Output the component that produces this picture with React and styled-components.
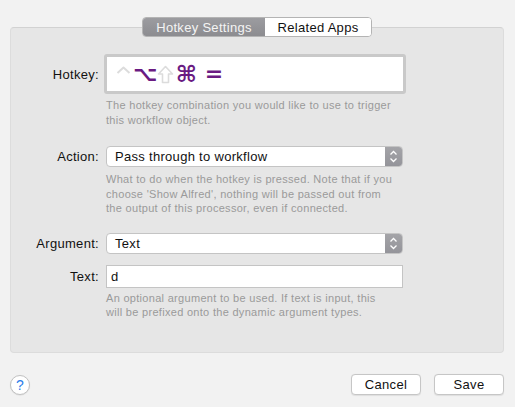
import React from "react";
import styled, { createGlobalStyle } from "styled-components";

const Global = createGlobalStyle`
  html, body { margin: 0; padding: 0; background: #f2f2f2; }
  body { font-family: "Liberation Sans", Arial, sans-serif; font-size: 13px; color: #1a1a1a; }
`;

const Window = styled.div`
  width: 515px;
  height: 407px;
  box-sizing: border-box;
  padding: 17px 11px 0 10px;
  display: flex;
  flex-direction: column;
`;

const Tabs = styled.div`
  align-self: center;
  display: flex;
  height: 20px;
  box-sizing: border-box;
  border: 1px solid #b4b4b4;
  border-radius: 4px;
  overflow: hidden;
  position: relative;
  z-index: 1;
  background: #fff;
`;

const Tab = styled.div`
  width: ${(p) => p.$w}px;
  display: flex;
  align-items: center;
  justify-content: center;
  font-size: 13px;
  letter-spacing: 0.3px;
  color: ${(p) => (p.$active ? "#f4f4f4" : "#111")};
  background: ${(p) => (p.$active ? "linear-gradient(#9c9ca0, #8c8c90)" : "#fff")};
`;

const Panel = styled.div`
  margin-top: -10px;
  height: 326px;
  box-sizing: border-box;
  background: #e6e6e6;
  border: 1px solid #dcdcdc;
  border-top-color: #d2d2d2;
  border-radius: 4px;
  padding-top: 26px;
  display: grid;
  grid-template-columns: 88px 297px;
  column-gap: 7px;
  align-content: start;
`;

const Label = styled.div`
  text-align: right;
  font-size: 13px;
  letter-spacing: 0.3px;
  align-self: center;
  color: #111;
  margin-top: ${(p) => p.$mt || 0}px;
`;

const HotkeyBox = styled.div`
  margin: 0 -3px 0 -2px;
  height: 40px;
  box-sizing: border-box;
  border: 3px solid #c9c9c9;
  border-radius: 3px;
  background: #fff;
  display: flex;
  align-items: center;
  padding-left: 11px;
`;

const Key = styled.span`
  font-family: "DejaVu Sans", sans-serif;
  font-weight: bold;
  font-size: ${(p) => p.$size || 21}px;
  color: #6a1b82;
  line-height: 1;
  width: ${(p) => p.$w}px;
  margin-left: ${(p) => p.$ml || 0}px;
  text-align: center;
  flex: none;
`;

const Hint = styled.div`
  grid-column: 2;
  font-size: 11px;
  letter-spacing: 0.3px;
  line-height: 14.5px;
  color: #9a9a9a;
  margin-top: ${(p) => p.$mt}px;
  margin-bottom: ${(p) => p.$mb}px;
`;

const Select = styled.div`
  height: 21px;
  box-sizing: border-box;
  border: 1px solid #c4c4c4;
  border-radius: 4px;
  background: #fff;
  display: flex;
  align-items: center;
  overflow: hidden;
`;

const SelectText = styled.span`
  flex: 1;
  padding-left: 8px;
  font-size: 13px;
  letter-spacing: 0.3px;
  color: #111;
`;

const Stepper = styled.div`
  width: 17px;
  align-self: stretch;
  background: linear-gradient(#a4a4a8, #94949a);
  display: flex;
  align-items: center;
  justify-content: center;
`;

const TextInput = styled.div`
  margin-top: 11px;
  height: 23px;
  box-sizing: border-box;
  border: 1px solid #c4c4c4;
  background: #fff;
  display: flex;
  align-items: center;
  padding-left: 4px;
  font-size: 13px;
  color: #111;
`;

const Footer = styled.div`
  display: flex;
  align-items: center;
  margin-top: 21px;
`;

const HelpButton = styled.div`
  width: 20px;
  height: 20px;
  box-sizing: border-box;
  border-radius: 50%;
  border: 1px solid #c2c2c2;
  background: #fff;
  color: #2b7de9;
  font-size: 14px;
  display: flex;
  align-items: center;
  justify-content: center;
  box-shadow: 0 0.5px 1px rgba(0,0,0,0.1);
`;

const Spacer = styled.div`
  flex: 1;
`;

const Button = styled.div`
  width: 70px;
  height: 21px;
  box-sizing: border-box;
  border: 1px solid #c6c6c6;
  border-radius: 4px;
  background: #fff;
  display: flex;
  align-items: center;
  justify-content: center;
  font-size: 13px;
  letter-spacing: 0.3px;
  color: #111;
  margin-left: ${(p) => p.$ml || 0}px;
  box-shadow: 0 0.5px 1px rgba(0,0,0,0.08);
`;

const StepIcon = () => (
  <svg width="9" height="13" viewBox="0 0 9 13">
    <path d="M1.5 4.5 L4.5 1.5 L7.5 4.5 M1.5 8.5 L4.5 11.5 L7.5 8.5" fill="none" stroke="#fff" strokeWidth="1.3" />
  </svg>
);

const CaretIcon = () => (
  <svg width="15" height="19" viewBox="0 0 15 19" style={{ flex: "none", marginLeft: "-2px", marginRight: "2px" }}>
    <path d="M1.5 8 L7.5 2.5 L13.5 8" fill="none" stroke="#dcdcdc" strokeWidth="2" strokeLinejoin="round" />
  </svg>
);

const ShiftIcon = () => (
  <svg width="17" height="19" viewBox="0 0 17 19" style={{ flex: "none", marginLeft: "3px" }}>
    <path d="M8.5 1.5 L15.5 9 L11.5 9 L11.5 17.5 L5.5 17.5 L5.5 9 L1.5 9 Z" fill="none" stroke="#dcdcdc" strokeWidth="1.6" strokeLinejoin="round" />
  </svg>
);

export default function App() {
  return (
    <>
      <Global />
      <Window>
        <Tabs>
          <Tab $active $w={122}>Hotkey Settings</Tab>
          <Tab $w={106}>Related Apps</Tab>
        </Tabs>
        <Panel>
          <Label>Hotkey:</Label>
          <HotkeyBox>
            <CaretIcon />
            <Key $w={21}>⌥</Key>
            <ShiftIcon />
            <Key $w={25} $size={23}>⌘</Key>
            <Key $w={20} $size={22} $ml={5}>=</Key>
          </HotkeyBox>
          <Hint $mt={4} $mb={19}>
            The hotkey combination you would like to use to trigger
            <br />
            this workflow object.
          </Hint>

          <Label>Action:</Label>
          <Select>
            <SelectText>Pass through to workflow</SelectText>
            <Stepper><StepIcon /></Stepper>
          </Select>
          <Hint $mt={5} $mb={17}>
            What to do when the hotkey is pressed. Note that if you
            <br />
            choose 'Show Alfred', nothing will be passed out from
            <br />
            the output of this processor, even if connected.
          </Hint>

          <Label>Argument:</Label>
          <Select>
            <SelectText>Text</SelectText>
            <Stepper><StepIcon /></Stepper>
          </Select>

          <Label $mt={11}>Text:</Label>
          <TextInput>d</TextInput>
          <Hint $mt={3} $mb={0}>
            An optional argument to be used. If text is input, this
            <br />
            will be prefixed onto the dynamic argument types.
          </Hint>
        </Panel>
        <Footer>
          <HelpButton>?</HelpButton>
          <Spacer />
          <Button>Cancel</Button>
          <Button $ml={13}>Save</Button>
        </Footer>
      </Window>
    </>
  );
}
